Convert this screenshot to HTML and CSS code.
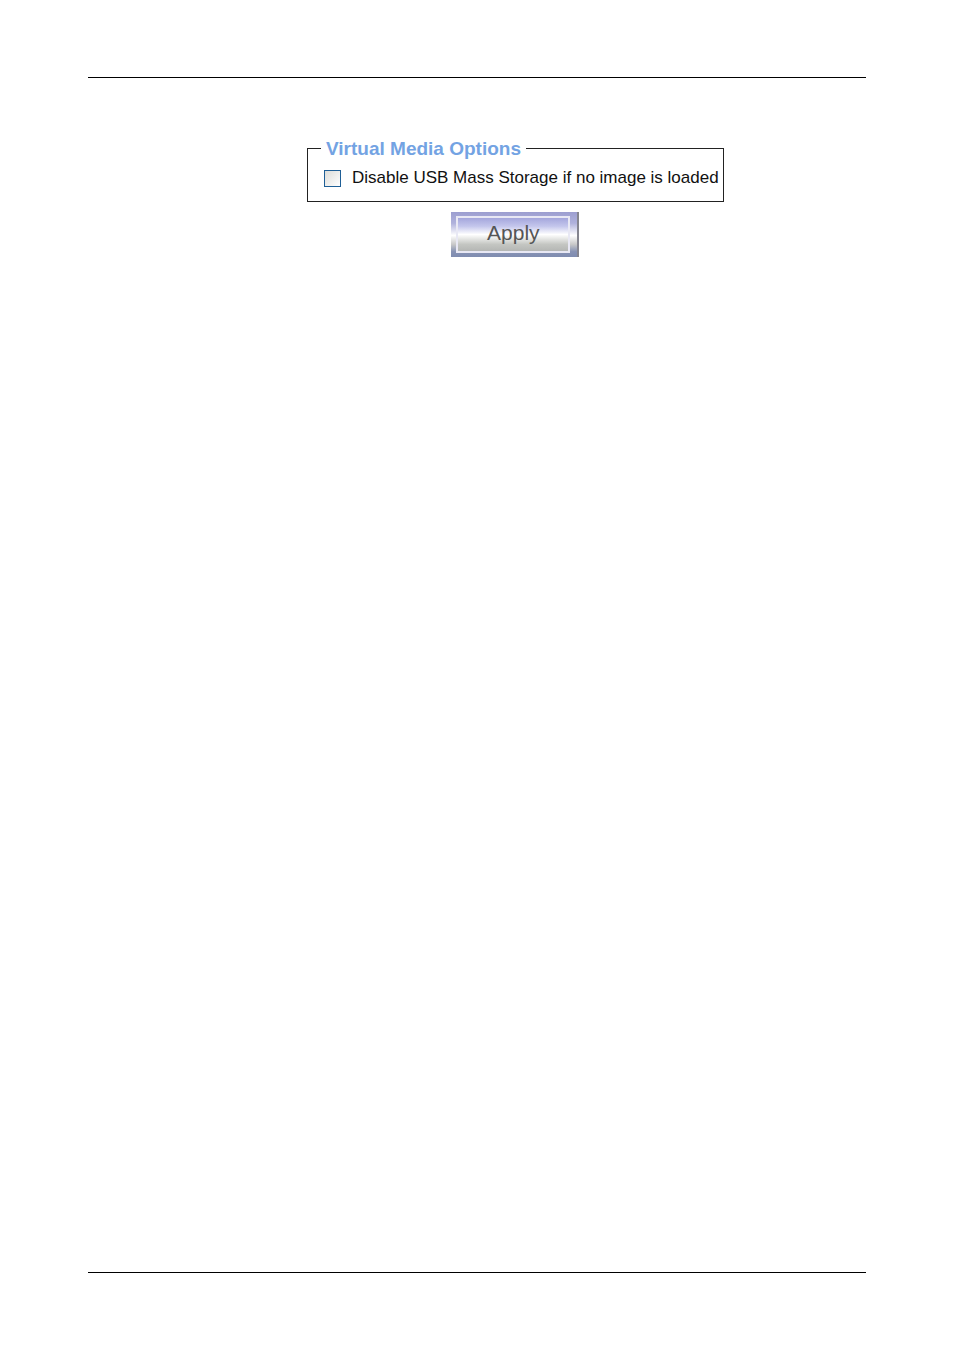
FILE: index.html
```
<!DOCTYPE html>
<html lang="en">
<head>
    <meta charset="UTF-8">
    <meta name="viewport" content="width=device-width, initial-scale=1.0">
    <title>Virtual Media Options</title>
    <link rel="stylesheet" href="styles.css">
</head>
<body>
    <main class="content">
        <form class="media-form">
            <fieldset class="options">
                <legend>Virtual Media Options</legend>
                <label class="option">
                    <input type="checkbox" name="disable_usb">
                    <span>Disable USB Mass Storage if no image is loaded</span>
                </label>
            </fieldset>
            <button type="button" class="apply-button"><span class="apply-face">Apply</span></button>
        </form>
    </main>
</body>
</html>
```
FILE: styles.css
```
* {
    margin: 0;
    padding: 0;
    box-sizing: border-box;
}

body {
    min-height: 100vh;
    display: flex;
    flex-direction: column;
    padding: 77px 88px;
    background: #fff;
    color: #111;
    font-family: "Liberation Sans", Arial, sans-serif;
}

/* Page area between the two rules */
.content {
    flex-grow: 1;
    padding: 59px 0 0 219px;
    border-top: 1px solid #000;
    border-bottom: 1px solid #000;
}

.media-form {
    display: flex;
    flex-direction: column;
    align-items: center;
    gap: 10px;
    width: fit-content;
}

/* Options box */
.options {
    border: 1px solid #222;
    padding: 7px 4px 11px 16px;
}

.options legend {
    margin-left: -3px;
    padding: 2px 5px 0;
    color: #73a3e3;
    font-size: 19px;
    font-weight: bold;
    line-height: 20px;
}

.option {
    display: flex;
    align-items: center;
    gap: 11px;
    font-size: 17px;
    line-height: 24px;
}

.option input {
    appearance: none;
    width: 17px;
    height: 17px;
    border: 1px solid #1f5f96;
    background: linear-gradient(135deg, #dcdcd8, #fff);
}

.option input:checked {
    background: #1f5f96;
}

/* Apply button */
.apply-button {
    display: flex;
    width: 128px;
    height: 45px;
    padding: 4px 7px 4px 5px;
    border: none;
    border-right: 2px solid #85858f;
    background: linear-gradient(#9c9ed0, #b0b2dc 25%, #fff 52%, #c8c8c8 72%, #8792b4 88%, #7f8cb0);
    color: #555;
    font-family: inherit;
    font-size: 21px;
    cursor: pointer;
}

.apply-face {
    flex: 1;
    height: 37px;
    border: 2px solid #e8e8f4;
    background: linear-gradient(#a4a6dc, #c4c6ec 25%, #fff 50%, #c4c6c2 80%, #b4b6b4);
    line-height: 29px;
}
```
